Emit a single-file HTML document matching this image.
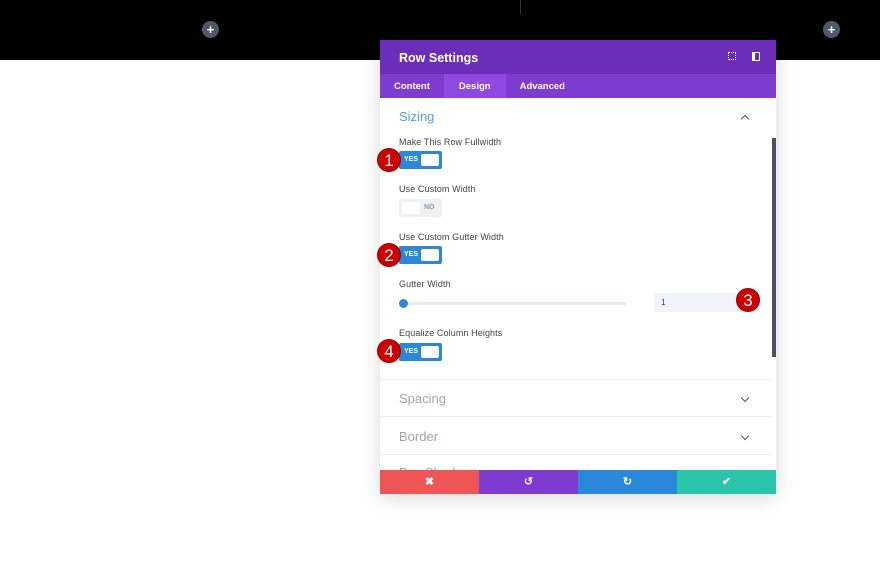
<!DOCTYPE html><html><head><style>
*{margin:0;padding:0;box-sizing:border-box}
body{width:880px;height:562px;background:#fff;position:relative;overflow:hidden;font-family:"Liberation Sans",sans-serif}
.top{position:absolute;left:0;top:0;width:880px;height:60px;background:#000}
.plus{position:absolute;width:17px;height:17px;border-radius:50%;background:#4e5a68;color:#fff;font-size:13px;line-height:17px;text-align:center;font-weight:bold}
.panel{position:absolute;left:380px;top:40px;width:396px;height:454px;background:#fff;box-shadow:0 4px 18px rgba(0,0,0,.15);overflow:hidden}
.hd{height:34px;background:#6c2eb9;color:#fff;font-size:12.5px;font-weight:bold;padding:11px 0 0 19px}
.tabs{height:24px;background:#7e3bd0;display:flex;font-size:9.5px;font-weight:bold;color:#fff}
.tabs div{padding:7px 14px 0}
.tabs .on{background:#8f49e0;padding:7px 15px 0}
.lbl{position:absolute;left:19px;font-size:9px;color:#444;font-weight:normal;letter-spacing:.1px}
.tog{position:absolute;left:19px;width:43px;height:18px;border-radius:2px;background:#2b87da}
.tog span{position:absolute;left:5px;top:5px;font-size:7px;color:#fff;font-weight:bold}
.tog i{position:absolute;right:3px;top:3px;width:18px;height:12px;background:#fff;border-radius:2px}
.off{background:#eef1f5}
.off span{left:25px;color:#8a95a3}
.off i{left:3px}
.badge{position:absolute;width:24px;height:24px;border-radius:50%;background:#c00;color:#fff;font-size:17px;text-align:center;line-height:24px;border:1px solid #900}
.sec{position:absolute;left:19px;font-size:13px;color:#9aa5b1}
.line{position:absolute;left:0;width:392px;height:1px;background:#eef1f4}
.chev{position:absolute;left:362px;width:6px;height:6px;border-right:1.5px solid #555;border-bottom:1.5px solid #555;transform:rotate(45deg)}
.ft{position:absolute;top:430px;left:0;width:396px;height:24px;display:flex}
.ft div{flex:1;color:#fff;text-align:center;font-size:11px;line-height:24px;font-weight:bold}
</style></head><body>
<div class="top"></div>
<div style="position:absolute;left:520px;top:0;width:1px;height:14px;background:#333"></div>
<div class="plus" style="left:202px;top:21px">+</div>
<div class="plus" style="left:823px;top:21px">+</div>
<div class="panel">
<div class="hd">Row Settings
<span style="position:absolute;left:348px;top:12px;width:8px;height:8px;border:1.5px dotted #fff"></span>
<span style="position:absolute;left:372px;top:12px;width:8px;height:9px;border:1.5px solid #fff;border-left-width:3px"></span></div>
<div class="tabs"><div>Content</div><div class="on">Design</div><div>Advanced</div></div>
<div class="sec" style="top:69px;color:#2b87da;opacity:.8">Sizing</div>
<div class="chev" style="top:76px;transform:rotate(225deg)"></div>
<div style="position:absolute;left:392px;top:98px;width:4px;height:219px;background:#4a5260"></div>
<div class="lbl" style="top:97px">Make This Row Fullwidth</div>
<div class="tog" style="top:111px"><span>YES</span><i></i></div>
<div class="lbl" style="top:144px">Use Custom Width</div>
<div class="tog off" style="top:159px"><span>NO</span><i></i></div>
<div class="lbl" style="top:192px">Use Custom Gutter Width</div>
<div class="tog" style="top:206px"><span>YES</span><i></i></div>
<div class="lbl" style="top:239px">Gutter Width</div>
<div style="position:absolute;left:23px;top:262px;width:223px;height:3px;background:#e6ebf1"></div>
<div style="position:absolute;left:19px;top:259px;width:9px;height:9px;border-radius:50%;background:#2b87da"></div>
<div style="position:absolute;left:274px;top:253px;width:90px;height:19px;background:#f1f4f8;font-size:8px;padding:5px 0 0 7px;color:#333">1</div>
<div class="lbl" style="top:288px">Equalize Column Heights</div>
<div class="tog" style="top:303px"><span>YES</span><i></i></div>
<div class="line" style="top:339px"></div>
<div class="sec" style="top:351px">Spacing</div><div class="chev" style="top:355px"></div>
<div class="line" style="top:376px"></div>
<div class="sec" style="top:389px">Border</div><div class="chev" style="top:393px"></div>
<div class="line" style="top:414px"></div>
<div class="sec" style="top:425px">Box Shadow</div>
<div class="ft"><div style="background:#ef5555">✖</div><div style="background:#7e3bd0">↺</div><div style="background:#2b87da">↻</div><div style="background:#29c4a9">✔</div></div>
</div>
<div class="badge" style="left:377px;top:148px">1</div>
<div class="badge" style="left:377px;top:243px">2</div>
<div class="badge" style="left:736px;top:288px">3</div>
<div class="badge" style="left:377px;top:339px">4</div>
</body></html>
